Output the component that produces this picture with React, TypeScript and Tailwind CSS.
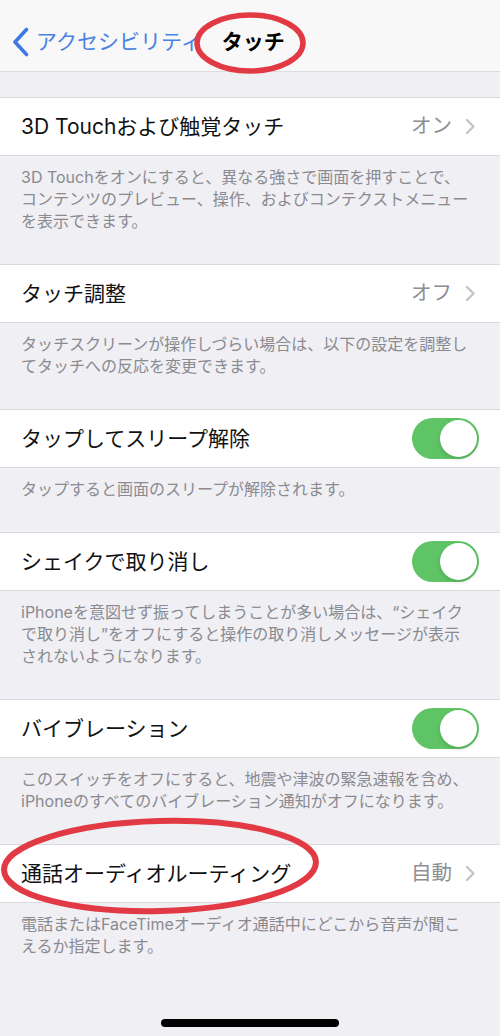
import React from "react";

type Row = {
  label: string;
  value?: string;
  toggle?: boolean;
  footer: string[];
};

const rows: Row[] = [
  {
    label: "3D Touchおよび触覚タッチ",
    value: "オン",
    footer: [
      "3D Touchをオンにすると、異なる強さで画面を押すことで、",
      "コンテンツのプレビュー、操作、およびコンテクストメニュー",
      "を表示できます。",
    ],
  },
  {
    label: "タッチ調整",
    value: "オフ",
    footer: [
      "タッチスクリーンが操作しづらい場合は、以下の設定を調整し",
      "てタッチへの反応を変更できます。",
    ],
  },
  {
    label: "タップしてスリープ解除",
    toggle: true,
    footer: ["タップすると画面のスリープが解除されます。"],
  },
  {
    label: "シェイクで取り消し",
    toggle: true,
    footer: [
      "iPhoneを意図せず振ってしまうことが多い場合は、“シェイク",
      "で取り消し”をオフにすると操作の取り消しメッセージが表示",
      "されないようになります。",
    ],
  },
  {
    label: "バイブレーション",
    toggle: true,
    footer: [
      "このスイッチをオフにすると、地震や津波の緊急速報を含め、",
      "iPhoneのすべてのバイブレーション通知がオフになります。",
    ],
  },
  {
    label: "通話オーディオルーティング",
    value: "自動",
    footer: [
      "電話またはFaceTimeオーディオ通話中にどこから音声が聞こ",
      "えるか指定します。",
    ],
  },
];

function Chevron() {
  return (
    <svg width="11" height="17" viewBox="0 0 11 17" className="ml-[13px] mr-[2px]">
      <path d="M2 2 L8.5 8.5 L2 15" fill="none" stroke="#c4c4c8" strokeWidth="2.4" strokeLinecap="round" strokeLinejoin="round" />
    </svg>
  );
}

function Toggle() {
  return (
    <div className="w-[67px] h-[41px] rounded-full bg-[#5ec465] flex items-center justify-end pr-[2px]">
      <div className="w-[37px] h-[37px] rounded-full bg-white shadow-[0_2px_4px_rgba(0,0,0,0.15)]" />
    </div>
  );
}

function SettingRow({ row }: { row: Row }) {
  return (
    <div>
      <div className={`h-[59px] bg-white border-y border-[#d9d9de] flex items-center pl-[21px] ${row.toggle ? "pr-[21px]" : "pr-[22px]"}`}>
        <span className="text-[21px] text-[#111] whitespace-nowrap">{row.label}</span>
        <div className="ml-auto flex items-center">
          {row.toggle ? (
            <Toggle />
          ) : (
            <>
              <span className="text-[20.5px] text-[#8e8e93]">{row.value}</span>
              <Chevron />
            </>
          )}
        </div>
      </div>
      <div className="pl-[21px] pt-[10px] pb-[32px] text-[16px] leading-[22px] text-[#8a8a8f]">
        {row.footer.map((line) => (
          <div key={line} className="whitespace-nowrap">{line}</div>
        ))}
      </div>
    </div>
  );
}

export default function App() {
  return (
    <div className="relative w-[500px] h-[1036px] overflow-hidden bg-[#efeff4] font-['Inter','Noto_Sans_CJK_JP',sans-serif]">
      <div className="h-[72px] bg-[#f8f8f8] border-b border-[#dcdce0] pt-[20px]">
        <div className="h-[44px] flex items-center pl-[12px]">
          <svg width="18" height="30" viewBox="0 0 18 30">
            <path d="M14.5 2.5 L3 15 L14.5 27.5" fill="none" stroke="#3d7ae6" strokeWidth="3.6" strokeLinecap="round" strokeLinejoin="round" />
          </svg>
          <span className="ml-[6px] text-[21px] text-[#4a82e3] whitespace-nowrap">アクセシビリティ</span>
          <span className="ml-[20px] text-[21px] font-bold text-black whitespace-nowrap">タッチ</span>
        </div>
      </div>

      <div className="pt-[25px]">
        {rows.map((row) => (
          <SettingRow key={row.label} row={row} />
        ))}
      </div>

      {/* home indicator */}
      <div className="absolute left-[161px] top-[1019px] w-[178px] h-[8px] rounded-full bg-black" />

      {/* red annotation circles */}
      <svg className="absolute inset-0 pointer-events-none" width="500" height="1036" viewBox="0 0 500 1036">
        <ellipse cx="250" cy="43" rx="53" ry="28" fill="none" stroke="#e23a44" strokeWidth="5.5" />
        <ellipse cx="160" cy="866" rx="156" ry="45" fill="none" stroke="#e23a44" strokeWidth="6" transform="rotate(-1.5 160 866)" />
      </svg>
    </div>
  );
}
